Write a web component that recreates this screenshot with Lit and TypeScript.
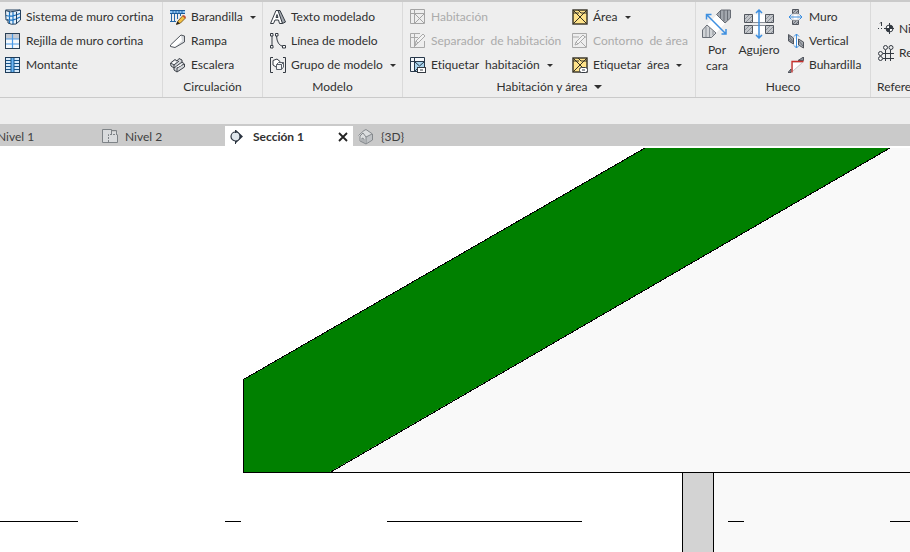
import { LitElement, html, svg, css, nothing, TemplateResult } from "lit";
import { customElement } from "lit/decorators.js";
import { classMap } from "lit/directives/class-map.js";

/* 16 x 16 glyphs of the ribbon and the view tabs */
const icons: Record<string, TemplateResult> = {
  curtainSystem: svg`<path d="M.5 1.500Q5 4 11 2L15.500 1V11L11 15Q6 16 3 14V11H1Z" fill="#e6f1fa"/>
    <path d="M4.500 3V14M8 3V15M1 6.500Q6 8 11 6L15 4.500M2 10.500Q6 12 11 10L15 8" stroke="#1b73c0" stroke-width="1.200" fill="none"/>
    <path d="M.5 1.500Q5 4 11 2L15.500 1V11L11 15Q6 16 3 14V11H1ZM11.500 3V15M.5 1H15" stroke="#23405e" fill="none"/>`,
  curtainGrid: svg`<rect x=".5" y=".5" width="14" height="15" fill="#f6f9fc"/><rect x="1" y="1" width="13" height="5" fill="#c5cad2"/>
    <path d="M7.500 1V15M1 6H14M1 11H14" stroke="#4b9ae6" stroke-width="1.200"/>
    <rect x=".5" y=".5" width="14" height="15" fill="none" stroke="#2b4055"/>`,
  mullion: svg`<rect x=".5" y=".5" width="14" height="15" fill="#d6eafb"/>
    <path d="M1 3.500H14M1 6.500H14M1 9.500H14M1 12.500H14" stroke="#17568c"/>
    <path d="M7.500 1V15" stroke="#17568c" stroke-width="4"/><path d="M7.500 1V15" stroke="#6db6f5" stroke-width="2"/>
    <rect x=".5" y=".5" width="14" height="15" fill="none" stroke="#1f3c59"/>`,
  railing: svg`<path d="M0 1H15V4H0Z" fill="#8cc4f4"/><path d="M0 1.500H15M0 4.500H15" stroke="#1c5c99"/><path d="M1.500 5V12M4.500 5V12M7.500 5V10M10.500 5V7M0 12.500H6M3 2V4M6 2V4M9 2V4M12 2V4" stroke="#2467a6"/>
    <path d="M6.500 15.500L8 12L13 6.500L15.500 9L10.500 14Z" fill="#f5c042" stroke="#6b4a12" stroke-width=".8"/><path d="M6 15.500L7.500 12.500L10 14.500Z" fill="#222"/><path d="M12.500 7L15 9.500L16 8L14 6Z" fill="#c84f36"/>`,
  ramp: svg`<path d="M.5 12L11 2L14.500 3V9L5 14.500L.5 13.500Z" fill="#fff"/><path d="M11 2L12 8L5 14L14.500 9V3Z" fill="#d4d7db"/><path d="M.5 12L11 2L14.500 3V9L5 14.500L.5 13.500Z" fill="none" stroke="#50555c"/>`,
  stair: svg`<path d="M.5 6L5 2.500L7 4L9 1.500L12 3V5L14.500 7V10L7 15L4 13V11L1 9Z" fill="#d4d7db" stroke="#3c4148"/>
    <path d="M1 6L4 8L9 4M4 8V11L12 5M7 11V15M7 11L14 7" stroke="#3c4148" fill="none"/><path d="M2 6L5 4L6 5L4 7ZM6 10L11 7L12 8L8 10Z" fill="#fff"/>`,
  modelText: svg`<path d="M7 1.500H10L15.500 13L12.500 14.500L10 10Z" fill="#a6abb2" stroke="#343a42"/><path d="M.5 14.500L6 1.500H8L12.500 14.500H9.500L8.500 11H5L3.500 14.500ZM6 8.500H8L7 5.500Z" fill="#fff" stroke="#343a42" fill-rule="evenodd"/>`,
  modelLine: svg`<path d="M2 3V13M6.500 3Q7 12 13 13.500" stroke="#343a42" fill="none"/>
    <path d="M.5.5H3V3H.5ZM.5 12.500H3V15H.5ZM5.500.5H8V3H5.500ZM12.500 12.500H15.500V15H12.500Z" fill="#fff" stroke="#343a42"/>`,
  modelGroup: svg`<path d="M3 .5H.5V15.500H3M13 .5H15.500V15.500H13" fill="none" stroke="#343a42"/><path d="M3 3.500L7 2L10 4.500L9 8L6 10L3 8Z" fill="#fff" stroke="#343a42"/>
    <path d="M6.500 7.500L8.500 5.500H13.500V10L11.500 12.500H6.500ZM6.500 7.500H11.500V12.500M11.500 7.500L13.500 5.500" fill="#f3f4f5" stroke="#5b616a"/>`,
  room: svg`<path d="M.5.500H14.500V14.500H.5ZM4.500 1V14M1 4.500H14M5 5L14 14M14 5L5 14" stroke="#a4a4a4" fill="none"/>`,
  roomSeparator: svg`<path d="M14.500 8V14.500H.5V.5H10M4.500 1V14M1 4.500H8M4 14L7 11" stroke="#a9a9a9" fill="none"/><path d="M5 12L6 8L13 1L15 3L8 10ZM6 8L8 10" stroke="#a9a9a9" fill="#f3f3f3"/>`,
  roomTag: svg`<rect x=".5" y=".5" width="14" height="14" fill="#f4f7fa"/><rect x="5" y="5" width="9" height="9" fill="#a9d3ec"/>
    <path d="M7 14.500H.5V.5H14.500V10M4.500 1V14M1 4.500H14M5 5L9.500 9L14 5M5 14L9 10" stroke="#27384a" fill="none"/><rect x="7.500" y="10.500" width="8" height="5" fill="#fff" stroke="#343a42"/><path d="M10 13H13" stroke="#343a42"/>`,
  area: svg`<rect x="1" y="1" width="14" height="14" fill="#ffe38a" stroke="#343024" stroke-width="1.400"/><path d="M1 1L15 15M15 1L1 15M1 4H7M6 1L9 4H15" stroke="#343024" fill="none"/>`,
  areaBoundary: svg`<path d="M.5.5H14.500V14.500H.5ZM1 4H7M14 14L9 9M9 4H15" fill="none" stroke="#ababab"/><path d="M3 12L4 9L11 2L13 4L6 11ZM4 9L6 11" fill="#f3f3f3" stroke="#ababab"/>`,
  areaTag: svg`<rect x="1" y="1" width="14" height="14" fill="#ffe38a" stroke="#343024" stroke-width="1.400"/><path d="M1 1L15 15M15 1L1 15M1 4H7M6 1L9 4H15" stroke="#343024" fill="none"/>
    <rect x="7.500" y="10.500" width="8" height="5" rx="2" fill="#fff" stroke="#343a42"/><path d="M10 13H13" stroke="#343a42"/>`,
  wallOpening: svg`<path d="M4.500.5H10.500V4.500H4.500ZM4.500 11.500H10.500V15.500H4.500Z" fill="#aeb2b8" stroke="#50555d"/><path d="M5 4L8 1M8 4L10 2M5 15L8 12M8 15L10 13" stroke="#50555d" stroke-width=".7"/>
    <path d="M5 5V11H10V5Z" fill="#fff" stroke="#d5d7da"/><path d="M1 8H14M3.500 5.500L1 8L3.500 10.500M11.500 5.500L14 8L11.500 10.500" stroke="#3d8fe0" fill="none"/>`,
  vertical: svg`<path d="M.5 1.500L5.500 5V11L.5 8ZM10.500 6L15.500 9V15L10.500 12Z" fill="#a3a8af" stroke="#50555d"/><path d="M1 3L5 9M1 6L4 10M11 8L15 13" stroke="#50555d" stroke-width=".7"/>
    <path d="M6 5L10 7V13L6 11Z" fill="#fff"/><path d="M8.500 1V15M6 3.500L8.500 1L11 3.500M6 12.500L8.500 15L11 12.500" stroke="#3d8fe0" fill="none"/>`,
  dormer: svg`<path d="M10 3.500L15.500 0V3.500ZM0 15.500L3 12V15.500Z" fill="#8b9098" stroke="#50555d"/><path d="M4.500 14.500V5H15L5 14Z" fill="#fff" stroke="#c4c7ca"/><path d="M4 15.500V4.500H15.500" stroke="#c9302c" stroke-width="1.300" fill="none"/>`,
  level: svg`<path d="M0 7.500H1M3 7.500H4M6 7.500H8M2 2.500L3.500 1V5" stroke="#343a42" fill="none"/><circle cx="11.500" cy="7.500" r="3.500" fill="#fff" stroke="#343a42"/>
    <path d="M11.500 4A3.500 3.500 0 0 1 15 7.500H11.500ZM11.500 11A3.500 3.500 0 0 1 8 7.500H11.500Z" fill="#343a42"/><path d="M11.500 2V13M7 7.500H16" stroke="#343a42"/>`,
  grid: svg`<circle cx="7.500" cy="2.500" r="2" /><circle cx="13" cy="2.500" r="2"/><circle cx="2.500" cy="8.500" r="2"/><circle cx="2.500" cy="13.500" r="2"/><path d="M7.500 5V16M12.500 5V16M5 8.500H16M5 13.500H16"/>`,
  plan: svg`<path d="M.5.5H9.500V3H15.500V13.500H.5Z" fill="#d9dbdd"/><path d="M7 13.500H.5V.5H9.500V5M9.500 1.500H14.500V5M6.500 13.500H15.500V5.500" fill="none" stroke="#7e8387"/><path d="M6.500 13V5.500H15" fill="none" stroke="#7e8387" stroke-dasharray="2 1"/>`,
  section: svg`<path d="M6 1L13 7.500L6 14Z" fill="#2b3440"/><circle cx="5.500" cy="7.500" r="4.500" fill="#dfe6ec" stroke="#2b3440" stroke-width="1.200"/><path d="M5.500 12V15M5.500 1V4" stroke="#2b3440"/>`,
  house: svg`<path d="M.5 6L6 1.500L8 .5L14.500 5V11L8 15.500L2 12V8Z" fill="#dcdedf"/><path d="M8 8L14 5V11L8 15Z" fill="#bfc2c5"/><path d="M.5 6.500L6 1.500L8 .5L14.500 5V11L8 15L2 12V7L5 4L8 8L14 5M8 8V15M4 13V9L6 10V14" fill="none" stroke="#85898d"/>`,
};

const largeIcons: Record<string, TemplateResult> = {
  byFace: svg`<path d="M15 5.500L23.500 14L14 24L5 16Z" fill="#fff"/><path d="M14.500 5.500L19 1H28.500V9L23 14Z" fill="#a2a7ae" stroke="#686d75"/><path d="M.5 21L5 16L14 24L9.500 28.500H.5Z" fill="#d0d3d6" stroke="#686d75"/>
    <path d="M18.500 2V9M22 1V12M25.500 1V11" stroke="#686d75"/><path d="M4 18V28M7.500 19V28M11 22V26" stroke="#8b9097"/>
    <path d="M5 6L24 25M4.500 10.500V5.500H9.500M19.500 25H24V20" stroke="#3d8fe0" stroke-width="1.500" fill="none"/>`,
  shaft: svg`<path d="M.5 5.500H29.500V13.500H.5ZM.5 16.500H29.500V24.500H.5Z" fill="#fff"/><path d="M.5 5.500H8.500V13.500H.5ZM21.500 5.500H29.500V13.500H21.500ZM.5 16.500H8.500V24.500H.5ZM21.500 16.500H29.500V24.500H21.500Z" fill="#c4c7cb"/>
    <path d="M1 10L5 6M2 13L8 7M6 13L8 11M22 10L26 6M23 13L29 7M27 13L29 11M1 21L5 17M2 24L8 18M6 24L8 22M22 21L26 17M23 24L29 18M27 24L29 22" stroke="#8b9098"/>
    <path d="M.5 5.500H8.500V13.500H.5ZM21.500 5.500H29.500V13.500H21.500ZM.5 16.500H8.500V24.500H.5ZM21.500 16.500H29.500V24.500H21.500Z" stroke="#50555d"/><path d="M9 13.500H21M9 16.500H21" stroke="#8b9098"/>
    <path d="M15 1V29M12 4L15 1L18 4M12 26L15 29L18 26" stroke="#3d8fe0" stroke-width="1.500" fill="none"/>`,
};

interface Command { label: string; icon: string; menu?: boolean; disabled?: boolean }

@customElement("ribbon-command")
class RibbonCommand extends LitElement {
  static properties = { command: { attribute: false } };
  declare command: Command;
  static styles = css`
    :host { display: block; }
    button {
      display: flex; align-items: center; gap: 5px; height: 24px; padding: 0; border: 0;
      background: none; color: #303030; font: 12px/16px Lato, "Open Sans", sans-serif; font-variant-ligatures: none; white-space: pre;
    }
    button:disabled { color: #ababab; }
    svg { flex: none; fill: none; }
    .outline { stroke: #343a42; }
    .arrow { margin-left: 2px; border: solid transparent; border-width: 3px 3px 0; border-top-color: #303030; }
  `;
  render() {
    const c = this.command;
    return html`<button ?disabled=${c.disabled} aria-haspopup=${c.menu ? "menu" : nothing}>
      <svg class=${classMap({ outline: c.icon === "grid" })} width="16" height="16" viewBox="0 0 16 16" aria-hidden="true">${icons[c.icon]}</svg><span>${c.label}</span>${c.menu ? html`<i class="arrow"></i>` : nothing}</button>`;
  }
}

@customElement("app-root")
class AppRoot extends LitElement {
  static styles = css`
    :host {
      display: flex; flex-direction: column; height: 100vh; overflow: hidden; background: #fff;
      color: #303030; font: 12px/16px Lato, "Open Sans", sans-serif; font-variant-ligatures: none;
    }
    .ribbon { display: flex; flex: none; background: #eee; border-top: 2px solid #cacaca; border-bottom: 1px solid #cacaca; overflow: hidden; }
    .panel { display: flex; flex-direction: column; flex: none; box-sizing: border-box; border-right: 1px solid #dadada; padding-top: 3px; }
    .curtain { width: 163px; }
    .circulation { width: 100px; }
    .model { width: 140px; }
    .rooms { width: 293px; }
    .opening { width: 175px; }
    .datum { width: 100px; border-right: 0; }
    .body { display: flex; height: 72px; }
    .column { flex: none; padding-left: 5px; }
    .circulation .column, .model .column, .rooms .column { padding-left: 7px; }
    .opening .column { padding-left: 8px; }
    .rooms .column { width: 155px; }
    .datum .column { padding: 12px 0 0 7px; }
    h2 { margin: 0; height: 20px; font-size: 12px; font-weight: 400; line-height: 20px; text-align: center; }
    .more { display: inline-block; margin-left: 6px; border: solid transparent; border-width: 4px 4px 0; border-top-color: #303030; vertical-align: 2px; }
    .datum h2 { text-align: left; padding-left: 6px; }
    .large { display: flex; flex-direction: column; align-items: center; gap: 3px; flex: none; width: 42px; padding: 4px 0 0; border: 0; background: none; color: inherit; font: inherit; font-variant-ligatures: none; }
    .large span { display: flex; flex-direction: column; align-items: center; line-height: 16px; }
    .large svg { fill: none; }
    .options { flex: none; height: 26px; background: #eee; }
    .tabs { display: flex; align-items: flex-end; flex: none; height: 22px; background: #cacaca; overflow: hidden; }
    .tab { display: flex; align-items: center; gap: 7px; flex: none; box-sizing: border-box; height: 20px; padding: 2px 5px 0; border: 0; background: none; color: #404040; font: inherit; white-space: nowrap; }
    .tab svg { flex: none; fill: none; }
    .first { width: 100px; margin-left: -3px; padding: 2px 0 0; }
    .second { width: 128px; }
    .active { display: flex; align-items: center; width: 128px; box-sizing: border-box; background: #fff; }
    .active .tab { color: #303030; font-weight: 700; }
    .close { margin-left: auto; padding: 2px 5px 0; border: 0; background: none; display: flex; }
    .view { flex: 1; min-height: 0; width: 100%; display: block; }
    .pale { fill: #f9f9f9; }
    .slab { fill: #008000; }
    .post { fill: #d3d3d3; }
    .edge { stroke: #000; fill: none; shape-rendering: crispEdges; }
  `;

  private column(...commands: Command[]) {
    return html`<div class="column">${commands.map((c) => html`<ribbon-command .command=${c}></ribbon-command>`)}</div>`;
  }

  private icon(name: string) {
    return html`<svg width="16" height="16" viewBox="0 0 16 16" aria-hidden="true">${icons[name]}</svg>`;
  }

  private large(name: string, ...lines: string[]) {
    return html`<button class="large"><svg width="30" height="30" viewBox="0 0 30 30" aria-hidden="true">${largeIcons[name]}</svg>
      <div>${lines.map((line) => html`<span>${line}</span>`)}</div></button>`;
  }

  render() {
    return html`
      <header class="ribbon">
        <section class="panel curtain"><div class="body">${this.column(
          { label: "Sistema de muro cortina", icon: "curtainSystem" },
          { label: "Rejilla de muro cortina", icon: "curtainGrid" },
          { label: "Montante", icon: "mullion" })}</div></section>
        <section class="panel circulation"><div class="body">${this.column(
          { label: "Barandilla", icon: "railing", menu: true },
          { label: "Rampa", icon: "ramp" },
          { label: "Escalera", icon: "stair" })}</div><h2>Circulación</h2></section>
        <section class="panel model"><div class="body">${this.column(
          { label: "Texto modelado", icon: "modelText" },
          { label: "Línea de modelo", icon: "modelLine" },
          { label: "Grupo de modelo", icon: "modelGroup", menu: true })}</div><h2>Modelo</h2></section>
        <section class="panel rooms"><div class="body">${this.column(
          { label: "Habitación", icon: "room", disabled: true },
          { label: "Separador  de habitación", icon: "roomSeparator", disabled: true },
          { label: "Etiquetar  habitación", icon: "roomTag", menu: true })}${this.column(
          { label: "Área", icon: "area", menu: true },
          { label: "Contorno  de área", icon: "areaBoundary", disabled: true },
          { label: "Etiquetar  área", icon: "areaTag", menu: true })}</div><h2>Habitación y área<i class="more"></i></h2></section>
        <section class="panel opening"><div class="body">
          ${this.large("byFace", "Por", "cara")}${this.large("shaft", "Agujero")}${this.column(
          { label: "Muro", icon: "wallOpening" },
          { label: "Vertical", icon: "vertical" },
          { label: "Buhardilla", icon: "dormer" })}</div><h2>Hueco</h2></section>
        <section class="panel datum"><div class="body">${this.column(
          { label: "Nivel", icon: "level" },
          { label: "Rejilla", icon: "grid" })}</div><h2>Referencia</h2></section>
      </header>
      <div class="options"></div>
      <nav class="tabs" aria-label="Vistas">
        <button class="tab first">Nivel 1</button>
        <button class="tab second">${this.icon("plan")}Nivel 2</button>
        <div class="active"><button class="tab">${this.icon("section")}Sección 1</button>
          <button class="close" aria-label="Cerrar"><svg width="10" height="10" viewBox="0 0 10 10"><path d="M1 1L9 9M9 1L1 9" stroke="#222" stroke-width="1.800"/></svg></button></div>
        <button class="tab">${this.icon("house")}{3D}</button>
      </nav>
      <svg class="view" role="img" aria-label="Sección 1">
        <path class="pale" d="M890 2H4000V326H330ZM714 327H4000V4000H714Z"/>
        <path class="slab" d="M243 234L645 2H890L330 326H243Z"/>
        <rect class="post" x="683" y="327" width="30" height="2000"/>
        <path class="edge" d="M243.500 326V233.500L645 2M890 2L330 326.500M243 326.500H4000M682.500 327V2000M713.500 327V2000"/>
        <path class="edge" d="M0 375.500H78M225 375.500H241M387 375.500H582M728 375.500H744M890 375.500H1085"/>
      </svg>`;
  }
}
